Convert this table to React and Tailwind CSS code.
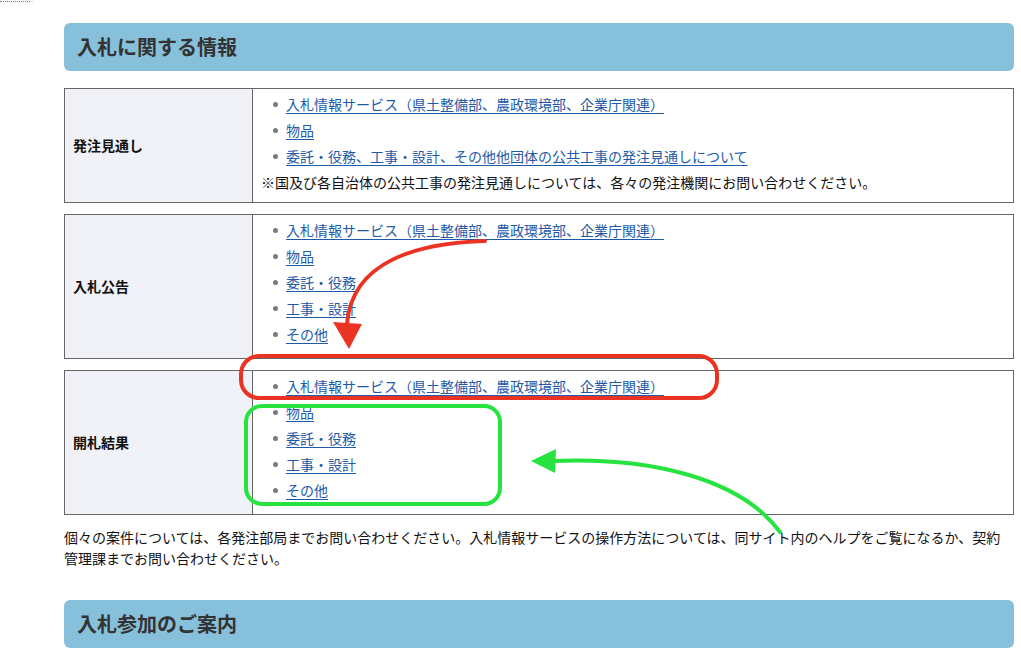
const font = { fontFamily: '"Noto Sans CJK JP", "Noto Sans", sans-serif' };

const Bullet = () => (
  <span className="w-[5px] h-[5px] rounded-full bg-[#7a7a7a] shrink-0 mr-[8px]"></span>
);

const LinkList = ({ items }) => (
  <ul className="pl-[12px]">
    {items.map((item) => (
      <li key={item} className="flex items-center h-[26px]">
        <Bullet />
        <a href="#" className="text-[#1d5aa8] underline underline-offset-[3px] decoration-[1px]">
          {item}
        </a>
      </li>
    ))}
  </ul>
);

const InfoTable = ({ label, items, note, className }) => (
  <div className={`flex border border-[#666] ${className}`}>
    <div className="w-[188px] shrink-0 bg-[#f1f2f8] border-r border-[#666] flex items-center pl-[8px] font-bold text-[14px] text-[#111]">
      {label}
    </div>
    <div className={`flex-1 pl-[8px] pt-[2px] ${note ? 'pb-[7px]' : 'pb-[11px]'}`}>
      <LinkList items={items} />
      {note && <p className="h-[26px] flex items-center text-[14px] text-[#111]">{note}</p>}
    </div>
  </div>
);

const SectionHeader = ({ children }) => (
  <h2 className="h-[48px] rounded-[6px] bg-[#87c0da] flex items-center pl-[13px] text-[20px] font-bold text-[#333]">
    {children}
  </h2>
);

const kindLinks = ['入札情報サービス（県土整備部、農政環境部、企業庁関連）', '物品', '委託・役務', '工事・設計', 'その他'];

const App = () => {
  return (
    <div className="relative min-h-[665px] bg-white text-[14px] overflow-hidden" style={font}>
      <div className="absolute left-0 top-0 w-[34px] h-[3px] bg-[#f3f3f5]">
        <div className="w-[30px] border-t border-dotted border-[#888] mt-[1px]"></div>
      </div>

      <div className="ml-[64px] w-[950px] pt-[23px]">
        <SectionHeader>入札に関する情報</SectionHeader>

        <InfoTable
          className="mt-[17px]"
          label="発注見通し"
          items={['入札情報サービス（県土整備部、農政環境部、企業庁関連）', '物品', '委託・役務、工事・設計、その他他団体の公共工事の発注見通しについて']}
          note="※国及び各自治体の公共工事の発注見通しについては、各々の発注機関にお問い合わせください。"
        />
        <InfoTable className="mt-[11px]" label="入札公告" items={kindLinks} />
        <InfoTable className="mt-[11px]" label="開札結果" items={kindLinks} />

        <p className="mt-[12px] leading-[21px] text-[#111]">
          個々の案件については、各発注部局までお問い合わせください。入札情報サービスの操作方法については、同サイト内のヘルプをご覧になるか、契約管理課までお問い合わせください。
        </p>

        <div className="mt-[31px]">
          <SectionHeader>入札参加のご案内</SectionHeader>
        </div>
      </div>

      {/* annotation overlay */}
      <svg className="absolute inset-0 pointer-events-none" width="1021" height="665" viewBox="0 0 1021 665">
        <path d="M485 241 C420 243 352 260 347 324" fill="none" stroke="#ea3323" strokeWidth="4" strokeLinecap="round" />
        <polygon points="333,322 362,324 349,349" fill="#ea3323" />
        <rect x="241" y="356" width="476" height="42" rx="18" fill="none" stroke="#ea3323" strokeWidth="4" />
        <rect x="246" y="406" width="254" height="98" rx="16" fill="none" stroke="#27e33f" strokeWidth="4" />
        <path d="M554 461 C650 457 740 478 780 532" fill="none" stroke="#27e33f" strokeWidth="4" strokeLinecap="round" />
        <polygon points="531,461 556,449 555,473" fill="#27e33f" />
      </svg>
    </div>
  );
};

export default App;
